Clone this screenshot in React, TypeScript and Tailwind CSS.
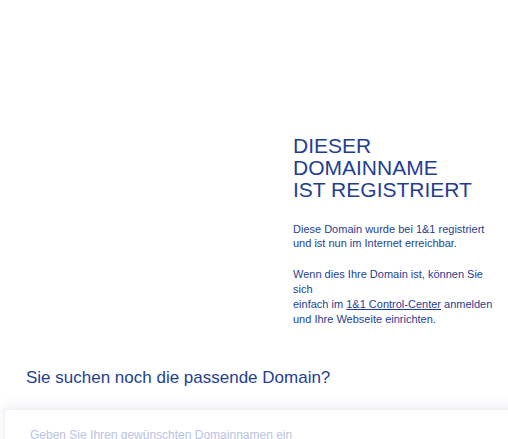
export default function App() {
  return (
    <div
      className="min-h-screen w-full overflow-hidden bg-white text-[#1f3e93]"
      style={{ fontFamily: '"Liberation Sans", Arial, sans-serif' }}
    >
      <div className="flex pt-[135px]">
        <div className="flex-1" />
        <div className="w-[215px] pr-2">
          <h1 className="text-[21px] leading-[22px] font-normal uppercase">
            Dieser
            <br />
            Domainname
            <br />
            ist registriert
          </h1>
          <p className="mt-[21px] text-[11px] leading-[14px]">
            Diese Domain wurde bei 1&amp;1 registriert
            <br />
            und ist nun im Internet erreichbar.
          </p>
          <p className="mt-[17px] text-[11px] leading-[15px]">
            Wenn dies Ihre Domain ist, können Sie sich
            <br />
            einfach im{' '}
            <a href="#" className="underline">
              1&amp;1 Control-Center
            </a>{' '}
            anmelden und Ihre Webseite einrichten.
          </p>
        </div>
      </div>

      <h2 className="mt-[41px] pl-[26px] text-[17px] leading-[20px] font-normal">
        Sie suchen noch die passende Domain?
      </h2>

      <div className="mt-[21px] ml-[4px] mr-[-20px] h-[60px] border border-[#eef0f5] bg-white shadow-[0_-4px_10px_rgba(60,80,140,0.08)]">
        <input
          type="text"
          placeholder="Geben Sie Ihren gewünschten Domainnamen ein"
          className="h-full w-full bg-transparent pl-[25px] pb-[8px] text-[12px] text-[#1f3e93] outline-none placeholder:text-[#b9c3e3]"
        />
      </div>
    </div>
  );
}
